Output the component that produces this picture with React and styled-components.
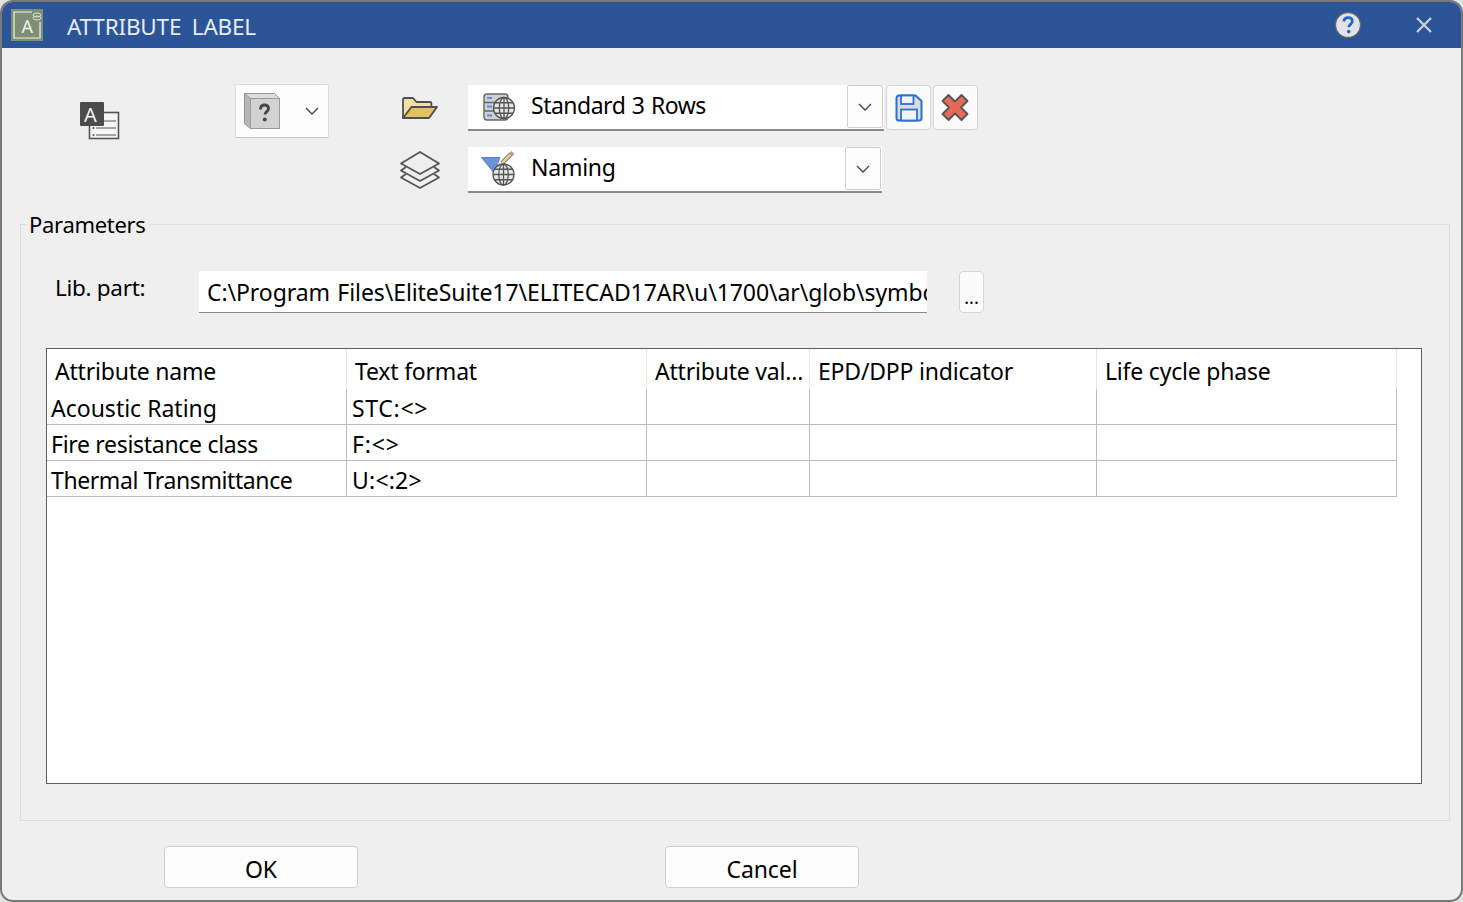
import React from "react";
import styled, { createGlobalStyle } from "styled-components";

const Global = createGlobalStyle`
  html, body { margin: 0; padding: 0; background: #e2e2e2; }
  * { box-sizing: border-box; }
  body { font-family: "Noto Sans", "Open Sans", "Liberation Sans", sans-serif; color: #000; }
`;

const Window = styled.div`
  width: 1463px; height: 902px; display: flex; flex-direction: column;
  background: #efefef; border: 2px solid #797979; border-radius: 13px; overflow: hidden;
`;
const TitleBar = styled.header`
  height: 46px; flex: none; background: #2b5597; display: flex; align-items: center;
  padding: 0 28px 0 9px; color: #e8eef6;
`;
const TitleText = styled.div`
  margin-left: 24px; font-size: 22.5px; letter-spacing: -0.2px; word-spacing: 5px; flex: 1; color: #e6edf6; padding-top: 3px;
`;
const TitleActions = styled.div`display: flex; align-items: center; gap: 53px; padding-bottom: 1px;`;

const Toolbar = styled.div`
  height: 165px; flex: none; display: flex; align-items: flex-start;
  padding: 36px 0 0 76px;
`;
const MainIcon = styled.div`margin-top: 15px; width: 42px; height: 42px;`;
const SplitPicker = styled.div`
  margin-left: 115px; width: 94px; height: 54px; background: #fdfdfd; border: 1px solid #dcdcdc;
  border-bottom-color: #c8c8c8; border-radius: 2px; display: flex; align-items: center;
  padding: 0 8px; justify-content: space-between;
`;
const ComboColumn = styled.div`
  margin-left: 70px; margin-top: 1px; display: flex; flex-direction: column; gap: 16px;
`;
const ComboLine = styled.div`display: flex; align-items: flex-start;`;
const LeadIcon = styled.div`width: 42px; height: 46px; display: flex; align-items: center; justify-content: center; margin-right: 27px;`;
const Combo = styled.div`
  width: ${p => p.$w}px; height: 46px; background: #fff; border-bottom: 2px solid #8a8a8a; display: flex;
  align-items: center; padding: 0 1px 1px 12px; font-size: 23px; letter-spacing: ${p => p.$spacing}px; word-spacing: 1px;
`;
const ComboIcon = styled.div`width: 38px; height: 36px; flex: none; display: flex; align-items: center; justify-content: center;`;
const ComboText = styled.div`margin-left: 13px; flex: 1; padding-bottom: 3px;`;
const ComboArrow = styled.div`
  width: 36px; height: 43px; flex: none; background: #fdfdfd; border: 1px solid #cfcfcf; border-radius: 2px;
  display: flex; align-items: center; justify-content: center;
`;
const IconButton = styled.button`
  width: 45px; height: 45px; margin-left: ${p => p.$ml || 0}px; padding: 0; background: #fbfbfb; border: 1px solid #d4d4d4; border-radius: 4px;
  display: flex; align-items: center; justify-content: center;
`;

const Group = styled.fieldset`
  margin: -2px 11px 0 18px; padding: 0; flex: none; height: 610px; border: 1.5px solid #dddddd; min-width: 0;
  position: relative;
`;
const GroupLegend = styled.legend`
  font-size: 22px; margin-left: 5px; padding: 0 3px; line-height: 26px; letter-spacing: -0.3px;
`;
const PathRow = styled.div`display: flex; align-items: flex-start; padding: 34px 0 0 34px;`;
const PathLabel = styled.label`width: 144px; font-size: 22.5px; letter-spacing: -0.3px; line-height: 34px;`;
const PathInput = styled.div`
  width: 728px; height: 42px; background: #fff; border-bottom: 1.5px solid #8a8a8a; overflow: hidden;
  white-space: nowrap; font-size: 23px; letter-spacing: -0.08px; word-spacing: 1.5px; line-height: 42px; padding: 0 0 0 8px;
`;
const DotsButton = styled.button`
  width: 25px; height: 42px; margin-left: 32px; padding: 10px 0 0; background: #fbfbfb; border: 1px solid #d6d6d6;
  border-radius: 4px; font: 18px "Noto Sans", sans-serif; color: #000; line-height: 20px;
`;
const TableBox = styled.div`
  margin: 35px 0 0 25px; width: 1376px; height: 436px; background: #fff; border: 1.5px solid #5f5f5f;
`;
const Grid = styled.table`
  table-layout: fixed; border-collapse: separate; border-spacing: 0; width: 1350px; font-size: 23px;
`;
const HeadCell = styled.th`
  font-weight: 400; text-align: left; height: 40px; padding: 3px 5px 0 8px; border-right: 1px solid #e6e6e6;
  white-space: nowrap; overflow: hidden; text-overflow: ellipsis; letter-spacing: -0.2px;
`;
const Cell = styled.td`
  height: 36px; padding: 2px 0 0 5px; border-right: 1px solid #bcbcbc; border-bottom: 1px solid #bcbcbc;
  white-space: nowrap; overflow: hidden; line-height: 32px; letter-spacing: ${p => p.$spacing ?? 0}px;
  &:first-child { padding-left: 4px; }
`;
const Footer = styled.div`
  flex: 1; display: flex; align-items: flex-start; padding: 25px 0 0 162px; gap: 307px;
`;
const DialogButton = styled.button`
  width: 194px; height: 42px; background: #fdfdfd; border: 1px solid #cfcfcf; border-radius: 4px;
  font: 23px "Noto Sans", sans-serif; letter-spacing: -0.1px; color: #000; padding: 3px 0 0;
`;

const Chevron = ({ color = "#444" }) => (
  <svg width="16" height="10" viewBox="0 0 16 10"><path d="M2 2l6 6 6-6" fill="none" stroke={color} strokeWidth="1.3" /></svg>
);

const AppBadge = () => (
  <svg width="32" height="32" viewBox="0 0 32 32">
    <rect width="32" height="32" fill="#7e8f75" />
    <path d="M21 3H3v26h26V13" fill="none" stroke="#eef2ea" strokeWidth="1.2" />
    <text x="10.500" y="23.500" fontSize="18" fill="#eef2ea" fontFamily="Noto Sans">A</text>
    <ellipse cx="26" cy="6" rx="4" ry="2" fill="none" stroke="#dfe6da" strokeWidth=".9" />
    <ellipse cx="26" cy="9" rx="4" ry="2" fill="none" stroke="#dfe6da" strokeWidth=".9" />
  </svg>
);
const HelpIcon = () => (
  <svg width="28" height="28" viewBox="0 0 28 28">
    <circle cx="14" cy="14" r="12.5" fill="#e1e3e6" stroke="#666" strokeWidth="1.3" />
    <path d="M9.800 10.500c.3-2.600 2-3.800 4.300-3.800 2.500 0 4.200 1.400 4.200 3.500 0 3.200-3.500 3.100-3.500 6" fill="none" stroke="#1f66cf" strokeWidth="2.700" />
    <circle cx="14.700" cy="20.600" r="1.800" fill="#1f66cf" />
  </svg>
);
const CloseIcon = () => (
  <svg width="18" height="18" viewBox="0 0 18 18"><path d="M2 2l14 14M16 2L2 16" stroke="#c9ced6" strokeWidth="2.400" /></svg>
);
const LabelIcon = () => (
  <svg width="42" height="42" viewBox="0 0 42 42">
    <rect x="11.500" y="13.500" width="29" height="26" fill="#f5f5f5" stroke="#555" strokeWidth="1.600" />
    <path d="M18 22h20M18 29h20M18 36h20" stroke="#555" strokeWidth="1" />
    <circle cx="15.500" cy="29" r="1.100" fill="#555" /><circle cx="15.500" cy="36" r="1.100" fill="#555" />
    <rect x="2" y="3" width="24" height="24" rx="1" fill="#4b4b4b" />
    <text x="6" y="23" fontSize="20" fill="#f2f2f2" fontFamily="Noto Sans">A</text>
  </svg>
);
const BoxIcon = () => (
  <svg width="38" height="38" viewBox="0 0 38 38">
    <path d="M.5 1.500L6.500 6.500v30l-6-5z" fill="#b5bab5" stroke="#8f948f" />
    <path d="M.5 1.500h30l5 5h-29z" fill="#dcdcdc" stroke="#9a9a9a" />
    <rect x="6.500" y="6.500" width="29" height="30" fill="#d2d2d2" stroke="#9a9a9a" />
    <path d="M16.500 17.500c0-3 1.700-4.500 4-4.500 2.500 0 4 1.500 4 3.500 0 3.200-3.500 3-3.500 6" fill="none" stroke="#474747" strokeWidth="2.800" />
    <circle cx="20.800" cy="27.500" r="2" fill="#474747" />
  </svg>
);
const FolderIcon = () => (
  <svg width="38" height="24" viewBox="0 0 38 24">
    <path d="M2 22V3.500C2 2.500 2.600 2 3.500 2H12l3.500 4H29c.9 0 1.400.5 1.400 1.400V11H11L3 22z" fill="#f2dfa6" stroke="#4f4f4f" strokeWidth="1.800" strokeLinejoin="round" />
    <path d="M10.500 11H36l-7.500 10.400c-.3.4-.6.6-1.200.6H2z" fill="#e3c266" stroke="#4f4f4f" strokeWidth="1.800" strokeLinejoin="round" />
  </svg>
);
const LayersIcon = () => (
  <svg width="42" height="40" viewBox="0 0 42 40">
    <path d="M21 2l19 11.500L21 24 2 13.500z" fill="none" stroke="#555" strokeWidth="1.800" strokeLinejoin="round" />
    <path d="M7 17l-5 3.500L21 31l19-10.500L35 17" fill="none" stroke="#555" strokeWidth="1.800" strokeLinejoin="round" />
    <path d="M7 24l-5 3.500L21 38l19-10.500L35 24" fill="none" stroke="#555" strokeWidth="1.800" strokeLinejoin="round" />
  </svg>
);
const Globe = ({ cx, cy, r }) => (
  <g fill="none" stroke="#555" strokeWidth="1.300">
    <circle cx={cx} cy={cy} r={r} fill="#e6e6e6" />
    <ellipse cx={cx} cy={cy} rx={r * 0.45} ry={r} />
    <path d={`M${cx} ${cy - r}v${2 * r}M${cx - r} ${cy}h${2 * r}M${cx - r * 0.87} ${cy - r * 0.5}h${1.74 * r}M${cx - r * 0.87} ${cy + r * 0.5}h${1.74 * r}`} />
  </g>
);
const ServerGlobeIcon = () => (
  <svg width="34" height="30" viewBox="0 0 34 30">
    <rect x="2" y="2" width="24" height="26" rx="3" fill="#d0d0d0" stroke="#666" strokeWidth="1.400" />
    <path d="M2 10.500h24M2 19h24" stroke="#666" strokeWidth="1.400" />
    <path d="M5 6h5M5 14.500h5M5 23.500h5" stroke="#5b8fdc" strokeWidth="2" />
    <Globe cx={22} cy={16} r={10.5} />
  </svg>
);
const FilterGlobeIcon = () => (
  <svg width="36" height="36" viewBox="0 0 36 36">
    <path d="M.5 6.500H19l-6 15.500z" fill="#6b93dc" stroke="#5b82cc" />
    <path d="M21 12l9-9" stroke="#666" strokeWidth="4.500" />
    <path d="M21 12l9-9" stroke="#e8cf8f" strokeWidth="2.800" />
    <path d="M28.500 2.500l2-2 2.500 2.500-2 2z" fill="#dc8f84" stroke="#888" strokeWidth=".6" />
    <Globe cx={22.5} cy={23.5} r={10.5} />
  </svg>
);
const SaveIcon = () => (
  <svg width="28" height="28" viewBox="0 0 28 28">
    <path d="M1.500 4A2.500 2.500 0 014 1.500h16.500L26.500 7v17a2.500 2.500 0 01-2.500 2.500H4A2.500 2.500 0 011.500 24z" fill="#dcdcdc" stroke="#2a6fd6" strokeWidth="2" />
    <rect x="6" y="1.500" width="12.500" height="8.500" fill="#f3f3f3" stroke="#2a6fd6" strokeWidth="1.800" />
    <rect x="6" y="15.500" width="16" height="11" fill="#f3f3f3" stroke="#2a6fd6" strokeWidth="1.800" />
  </svg>
);
const CancelIcon = () => (
  <svg width="30" height="30" viewBox="0 0 30 30">
    <path d="M7.500 2l6.500 6.500L20.500 2l6 6-6.500 6.500 6.500 6.500-6 6-6.500-6.500L7.500 27l-6-6L8 14.500 1.500 8z" fill="#e56a57" stroke="#555" strokeWidth="1.800" strokeLinejoin="round" />
  </svg>
);

const columns = [300, 300, 163, 287, 300];
const headers = ["Attribute name", "Text format", "Attribute value", "EPD/DPP indicator", "Life cycle phase"];
const rows = [
  { name: "Acoustic Rating", format: "STC:<>", nameSpacing: 0, formatSpacing: 0.7 },
  { name: "Fire resistance class", format: "F:<>", nameSpacing: -0.3, formatSpacing: 0.8 },
  { name: "Thermal Transmittance", format: "U:<:2>", nameSpacing: -0.4, formatSpacing: 0.2 },
];

export default function App() {
  return (
    <>
      <Global />
      <Window>
        <TitleBar>
          <AppBadge />
          <TitleText>ATTRIBUTE LABEL</TitleText>
          <TitleActions><HelpIcon /><CloseIcon /></TitleActions>
        </TitleBar>
        <Toolbar>
          <MainIcon><LabelIcon /></MainIcon>
          <SplitPicker><BoxIcon /><Chevron /></SplitPicker>
          <ComboColumn>
            <ComboLine>
              <LeadIcon><FolderIcon /></LeadIcon>
              <Combo $w={416} $spacing={-0.5}>
                <ComboIcon><ServerGlobeIcon /></ComboIcon>
                <ComboText>Standard 3 Rows</ComboText>
                <ComboArrow><Chevron /></ComboArrow>
              </Combo>
              <IconButton $ml={2}><SaveIcon /></IconButton>
              <IconButton $ml={2}><CancelIcon /></IconButton>
            </ComboLine>
            <ComboLine>
              <LeadIcon><LayersIcon /></LeadIcon>
              <Combo $w={414} $spacing={-0.25}>
                <ComboIcon><FilterGlobeIcon /></ComboIcon>
                <ComboText>Naming</ComboText>
                <ComboArrow><Chevron /></ComboArrow>
              </Combo>
            </ComboLine>
          </ComboColumn>
        </Toolbar>
        <Group>
          <GroupLegend>Parameters</GroupLegend>
          <PathRow>
            <PathLabel>Lib. part:</PathLabel>
            <PathInput>C:\Program Files\EliteSuite17\ELITECAD17AR\u\1700\ar\glob\symbols</PathInput>
            <DotsButton>...</DotsButton>
          </PathRow>
          <TableBox>
            <Grid>
              <colgroup>{columns.map((w, i) => <col key={i} style={{ width: w }} />)}</colgroup>
              <thead>
                <tr>{headers.map(h => <HeadCell key={h}>{h}</HeadCell>)}</tr>
              </thead>
              <tbody>
                {rows.map(r => (
                  <tr key={r.name}>
                    <Cell $spacing={r.nameSpacing}>{r.name}</Cell>
                    <Cell $spacing={r.formatSpacing}>{r.format}</Cell>
                    <Cell /><Cell /><Cell />
                  </tr>
                ))}
              </tbody>
            </Grid>
          </TableBox>
        </Group>
        <Footer>
          <DialogButton>OK</DialogButton>
          <DialogButton>Cancel</DialogButton>
        </Footer>
      </Window>
    </>
  );
}
